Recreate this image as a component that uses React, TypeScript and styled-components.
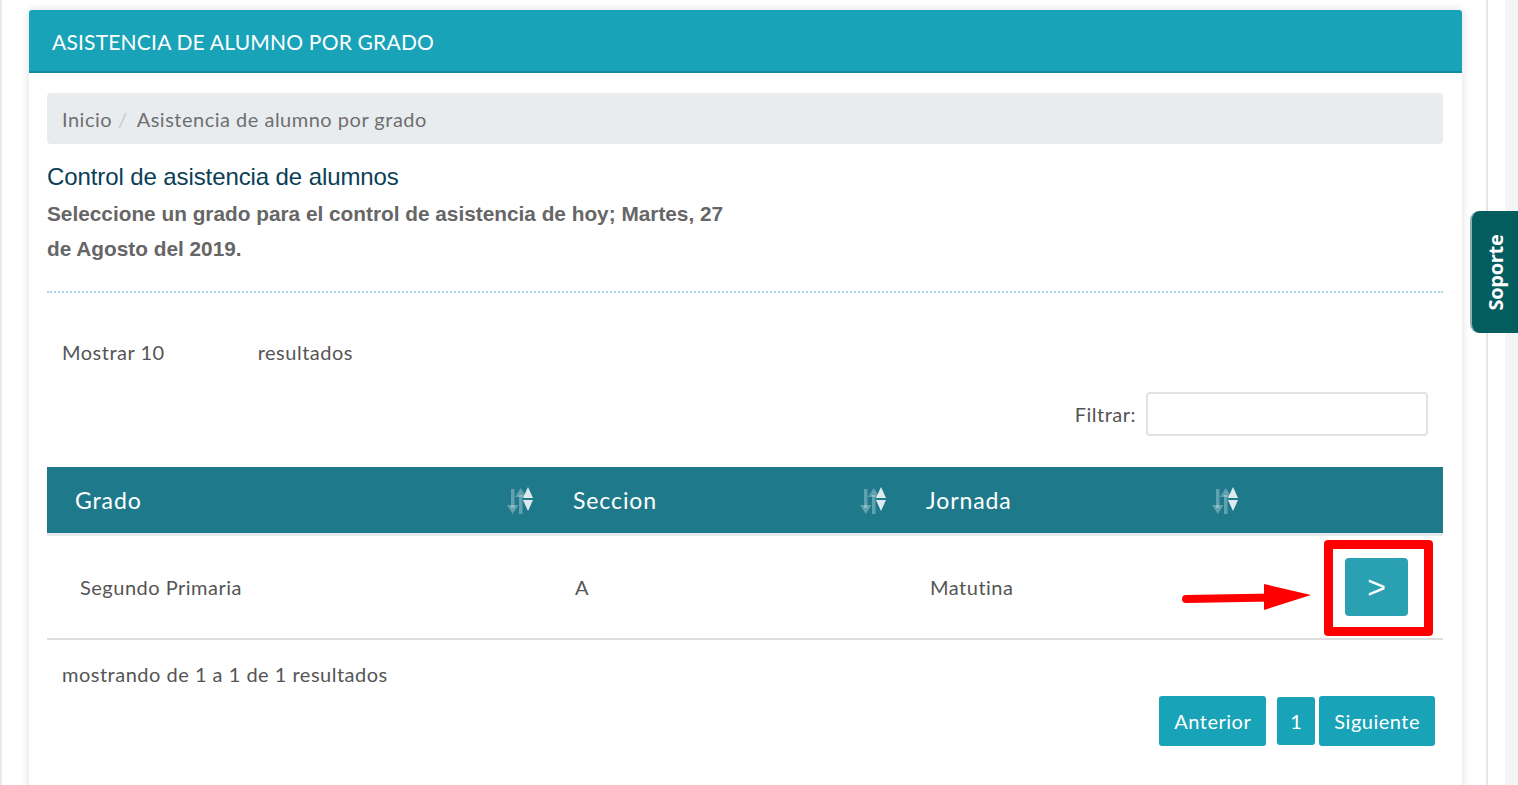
import React from 'react'
import styled, { createGlobalStyle } from 'styled-components'

const GlobalStyle = createGlobalStyle`
  html, body {
    margin: 0;
    padding: 0;
    background: #ffffff;
    overflow: hidden;
  }
  * { box-sizing: border-box; }
  body {
    font-family: Lato, "Open Sans", sans-serif;
    color: #555;
  }
`;

const Page = styled.div`
  display: flex;
  height: 785px;
  border-left: 2px solid #e8ebef;
  overflow: hidden;
`;

const Main = styled.div`
  width: 1486px;
  padding: 10px 0 0 27px;
  border-right: 2px solid #e4e8ec;
  flex-shrink: 0;
`;

const Gutter = styled.div`
  flex: 1;
  display: flex;
  justify-content: flex-end;
`;

const GutterShade = styled.div`
  width: 13px;
  background: #f5f5f5;
`;

const Card = styled.section`
  width: 1433px;
  min-height: 800px;
  background: #fff;
  border-radius: 3px;
  box-shadow: 0 0 8px rgba(0, 0, 0, 0.14);
`;

const CardHeader = styled.header`
  height: 63px;
  background: #18a3b8;
  border-bottom: 2px solid #138c9e;
  border-radius: 3px 3px 0 0;
  color: #fff;
  font-size: 21px;
  padding: 19px 0 0 23px;
  letter-spacing: 0.2px;
`;

const CardBody = styled.div`
  padding: 20px 19px 0 18px;
`;

const Breadcrumb = styled.nav`
  height: 51px;
  background: #e9ecef;
  border-radius: 4px;
  display: flex;
  align-items: center;
  padding-left: 15px;
  font-size: 20px;
  letter-spacing: 0.5px;
  color: #6f6f6f;
`;

const Sep = styled.span`
  color: #c8c8c8;
  padding: 0 9px 0 6px;
`;

const Title = styled.h3`
  margin: 19px 0 0;
  font-family: "Liberation Sans", Arial, sans-serif;
  font-weight: normal;
  font-size: 24px;
  letter-spacing: -0.1px;
  color: #0b3e57;
  line-height: 28px;
`;

const Subtitle = styled.p`
  margin: 5px 0 0;
  width: 692px;
  font-family: "Liberation Sans", Arial, sans-serif;
  font-weight: bold;
  font-size: 20.8px;
  line-height: 35px;
  color: #666;
`;

const Divider = styled.hr`
  margin: 25px 0 0;
  border: none;
  border-top: 2px dotted #a9d5ee;
`;

const LengthRow = styled.div`
  margin-top: 47px;
  padding-left: 15px;
  font-size: 20px;
  letter-spacing: 0.5px;
  color: #555;
  display: flex;
`;

const LengthGap = styled.span`
  width: 93px;
`;

const FilterRow = styled.div`
  margin-top: 28px;
  display: flex;
  justify-content: flex-end;
  align-items: center;
  gap: 10px;
  padding-right: 15px;
  font-size: 20px;
  letter-spacing: 0.5px;
`;

const FilterInput = styled.input`
  width: 282px;
  height: 44px;
  border: 2px solid #e2e2e2;
  border-radius: 4px;
  outline: none;
`;

const Table = styled.table`
  margin-top: 31px;
  width: 1396px;
  border-collapse: collapse;
  table-layout: fixed;
`;

const HeadCell = styled.th<{ $w: number }>`
  width: ${p => p.$w}px;
  height: 67px;
  background: #1e7a8b;
  border-bottom: 3px solid #e7eaec;
  color: #fff;
  font-weight: normal;
  font-size: 23px;
  text-align: left;
  padding: 0 0 0 28px;
  letter-spacing: 0.9px;
`;

const HeadInner = styled.div`
  display: flex;
  justify-content: space-between;
  align-items: center;
  padding-right: 8px;
`;

const Cell = styled.td<{ $pad: number }>`
  height: 105px;
  border-bottom: 2px solid #dedede;
  font-size: 20px;
  letter-spacing: 0.5px;
  color: #555;
  padding: 0 0 0 ${p => p.$pad}px;
`;

const ActionCell = styled.td`
  border-bottom: 2px solid #dedede;
  position: relative;
  padding: 0;
`;

const GoButton = styled.button`
  position: absolute;
  left: 95px;
  top: 22px;
  width: 63px;
  height: 58px;
  background: #2aa0b3;
  border: none;
  border-radius: 4px;
  color: #fff;
  font-size: 32px;
  font-family: "Liberation Sans", Arial, sans-serif;
  line-height: 1;
  padding: 0;
`;

const Highlight = styled.div`
  position: absolute;
  left: 74px;
  top: 4px;
  width: 109px;
  height: 96px;
  border: 9px solid #ff0000;
  border-radius: 4px;
`;

const Arrow = styled.svg`
  position: absolute;
  left: -68px;
  top: 46px;
`;

const Info = styled.div`
  margin-top: 22px;
  padding-left: 15px;
  font-size: 20px;
  letter-spacing: 0.5px;
  color: #555;
`;

const Pager = styled.div`
  margin-top: 10px;
  display: flex;
  justify-content: flex-end;
  align-items: center;
  padding-right: 8px;
`;

const PageBtn = styled.button<{ $gap?: number; $small?: boolean }>`
  height: ${p => (p.$small ? 48 : 50)}px;
  margin-left: ${p => p.$gap ?? 0}px;
  padding: 0 ${p => (p.$small ? 13 : 15)}px;
  background: #18a3b8;
  border: none;
  border-radius: 3px;
  color: #fff;
  font-family: Lato, "Open Sans", sans-serif;
  font-size: 20px;
  letter-spacing: 0.5px;
`;

const SupportTab = styled.div`
  position: absolute;
  left: 1470px;
  top: 211px;
  width: 50px;
  height: 122px;
  background: #035c5e;
  border-radius: 9px 0 0 9px;
  border-left: 2px solid #8fb0b0;
  display: flex;
  align-items: center;
  justify-content: center;
`;

const SupportText = styled.span`
  transform: rotate(-90deg);
  color: #fff;
  font-family: "Open Sans", sans-serif;
  font-weight: bold;
  font-size: 20px;
  letter-spacing: -0.3px;
  white-space: nowrap;
`;

const SortIcon = () => (
  <svg width="30" height="30" viewBox="0 0 30 30">
    <g fill="rgba(255,255,255,0.3)">
      <rect x="4" y="4" width="3.5" height="19" />
      <polygon points="0,20 11.5,20 5.75,29" />
      <rect x="12" y="10" width="3.5" height="19" />
      <polygon points="8,12 19.5,12 13.75,3" />
    </g>
    <polygon points="16,13 26,13 21,2" fill="rgba(255,255,255,0.85)" />
    <polygon points="16,15 26,15 21,26" fill="rgba(255,255,255,0.85)" />
  </svg>
)

const columns = [
  { label: 'Grado', w: 498 },
  { label: 'Seccion', w: 353 },
  { label: 'Jornada', w: 352 },
]

export default function App() {
  return (
    <>
      <GlobalStyle />
      <Page>
        <Main>
          <Card>
            <CardHeader>ASISTENCIA DE ALUMNO POR GRADO</CardHeader>
            <CardBody>
              <Breadcrumb>
                Inicio<Sep>/</Sep>Asistencia de alumno por grado
              </Breadcrumb>
              <Title>Control de asistencia de alumnos</Title>
              <Subtitle>
                Seleccione un grado para el control de asistencia de hoy; Martes, 27 de Agosto del 2019.
              </Subtitle>
              <Divider />
              <LengthRow>
                Mostrar 10<LengthGap />resultados
              </LengthRow>
              <FilterRow>
                Filtrar:
                <FilterInput type="search" />
              </FilterRow>
              <Table>
                <thead>
                  <tr>
                    {columns.map(c => (
                      <HeadCell key={c.label} $w={c.w}>
                        <HeadInner>
                          {c.label}
                          <SortIcon />
                        </HeadInner>
                      </HeadCell>
                    ))}
                    <HeadCell $w={193} />
                  </tr>
                </thead>
                <tbody>
                  <tr>
                    <Cell $pad={33}>Segundo Primaria</Cell>
                    <Cell $pad={30}>A</Cell>
                    <Cell $pad={32}>Matutina</Cell>
                    <ActionCell>
                      <Arrow width="130" height="30" viewBox="0 0 130 30">
                        <line x1="4" y1="17" x2="90" y2="15.5" stroke="#f00" strokeWidth="8" strokeLinecap="round" />
                        <polygon points="82,2 129,13 82,28" fill="#f00" />
                      </Arrow>
                      <Highlight />
                      <GoButton>&gt;</GoButton>
                    </ActionCell>
                  </tr>
                </tbody>
              </Table>
              <Info>mostrando de 1 a 1 de 1 resultados</Info>
              <Pager>
                <PageBtn>Anterior</PageBtn>
                <PageBtn $gap={11} $small>1</PageBtn>
                <PageBtn $gap={4}>Siguiente</PageBtn>
              </Pager>
            </CardBody>
          </Card>
        </Main>
        <Gutter>
          <GutterShade />
        </Gutter>
      </Page>
      <SupportTab>
        <SupportText>Soporte</SupportText>
      </SupportTab>
    </>
  )
}
